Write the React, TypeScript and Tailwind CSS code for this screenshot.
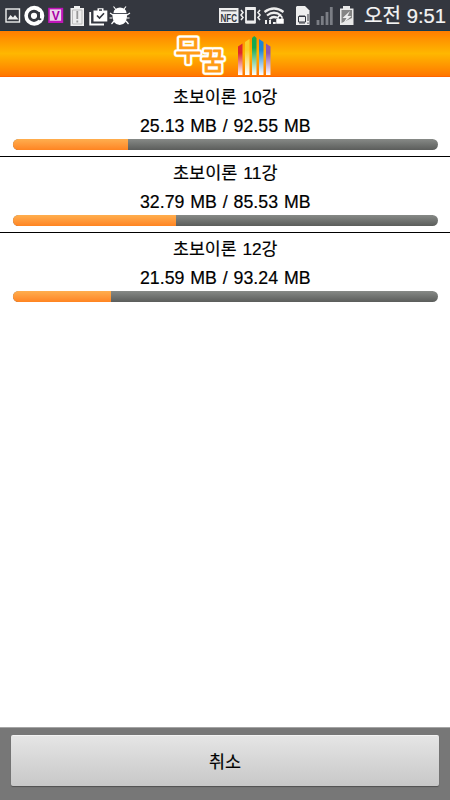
import { clsx } from "clsx";

type Download = {
	id: number;
	title: string;
	done: string;
	total: string;
	width: number;
};

const downloads: Download[] = [
	{ id: 1, title: "초보이론 10강", done: "25.13", total: "92.55", width: 115.5 },
	{ id: 2, title: "초보이론 11강", done: "32.79", total: "85.53", width: 163 },
	{ id: 3, title: "초보이론 12강", done: "21.59", total: "93.24", width: 98.5 },
];

function NotificationIcons() {
	return (
		<svg width="135" height="30" viewBox="0 0 135 30" fill="none">
			<rect x="6" y="9" width="13.5" height="13" stroke="#eee" strokeWidth="1.4" />
			<path d="M7.5 19.5l3-4.5 2.5 2.5 2-2.5 3.5 4.5z" fill="#eee" />
			<circle cx="34.3" cy="15.8" r="10" fill="#fff" />
			<circle cx="34" cy="15.8" r="4.6" stroke="#34373f" strokeWidth="3" />
			<path d="M38.8 12v6.5q1 1.5 2 0" stroke="#34373f" strokeWidth="2.2" />
			<rect x="49" y="8.6" width="13.4" height="13.6" fill="#ecd6ec" stroke="#c014b8" strokeWidth="1.6" />
			<path d="M50 21.5h12V9" stroke="#c014b8" strokeWidth="1.6" />
			<text x="55.7" y="19.5" textAnchor="middle" fontSize="12" fontWeight="700" fill="#a800a4" className="font-['Liberation_Sans']">V</text>
			<path d="M74 6h6v2h4v18H70.5V8H74z" fill="#eee" />
			<path d="M72.5 10h9.5v14h-9.5z" stroke="#bbb" />
			<path d="M77.3 11v8M77.3 20.5v2" stroke="#999" strokeWidth="1.8" />
			<path d="M90.2 12v12.5H104" stroke="#fff" strokeWidth="1.8" />
			<path d="M93.5 10.5h4V8.2h6v2.3h3.8v11H93.5z" fill="#fff" />
			<path d="M99 9.3h3v1.5h-3z" fill="#34373f" />
			<path d="M97 15.5l2.5 2.5 4.5-4.8" stroke="#34373f" strokeWidth="1.6" />
			<path d="M113.5 13a6.5 5.5 0 0 1 13 0z" fill="#fff" />
			<path d="M112.5 14h14.5q1 10-7.3 11-8.2-1-7.2-11z" fill="#fff" />
			<path d="M115.5 9l-2-2.5M124 9l2-2.5M113 15l-3-2M127 15l3-2M112 18h-2.5M127 18h2.5M114 21l-2.5 3M126 21l2.5 3" stroke="#fff" strokeWidth="1.2" />
			<path d="M112.5 13.5h14.5" stroke="#555861" strokeWidth=".8" />
		</svg>
	);
}

function SystemIcons() {
	return (
		<svg width="140" height="30" viewBox="216 0 140 30" fill="none">
			<path d="M219 8h19.5v15H219z" fill="#eee" />
			<path d="M221 10.8h15.5" stroke="#34373f" />
			<text x="228.7" y="21.5" textAnchor="middle" fontSize="10" fontWeight="700" fill="#34373f" textLength="16.5" lengthAdjust="spacingAndGlyphs" className="font-['Liberation_Sans']">NFC</text>
			<rect x="246" y="8" width="9" height="14.5" stroke="#eee" strokeWidth="1.8" />
			<path d="M246 8.5h9M246 22h9" stroke="#eee" strokeWidth="3" />
			<path d="M241 10l2 2.5-2 2.5 2 2.5-2 2.5M260 10l-2 2.5 2 2.5-2 2.5 2 2.5" stroke="#eee" strokeWidth="1.6" />
			<path d="M264.5 12q9.5-7 19 0M267 15.5q7-5.5 14 0M269.5 19q4.5-4 9 0" stroke="#eee" strokeWidth="2.2" />
			<path d="M266 24v-4M270 24v-4M273 23h3" stroke="#eee" strokeWidth="2" />
			<path d="M276 18.5h8V24h-8z" fill="#fff" stroke="#34373f" strokeWidth=".5" />
			<path d="M278 19v-2q2-2.5 4 0v2" stroke="#fff" strokeWidth="1.3" />
			<path d="M297 6h8l4.5 4.5V25H296V7z" fill="#eee" />
			<path d="M298.5 16.5h7v5.5h-7zM300 15v2M302 15v2M304 15v2M300 22v2M302 22v2M304 22v2" stroke="#34373f" />
			<path d="M308 14v7M308 22.5v1.5" stroke="#34373f" />
			<path d="M318 25v-5M322.3 25v-9M327 25V12M331.3 25V7" stroke="#7b7e85" strokeWidth="2.8" />
			<path d="M343 6h7v2.5h3.5V25H340V8.5h3z" fill="#e8e8e8" />
			<path d="M341.5 10h10.5v8l-10.5 5z" fill="#858585" />
			<path d="M350 11l-7.5 7h4l-3 5 8-7h-4z" fill="#eee" />
		</svg>
	);
}

function StatusBar() {
	return (
		<div className="flex h-[31px] shrink-0 items-start justify-between border-b border-[#173c50] bg-[#34373f]">
			<NotificationIcons />
			<div className="flex items-start">
				<SystemIcons />
				<svg width="94" height="30" viewBox="356 0 94 30">
					<text x="364" y="23" fontSize="20.5" fill="#f4f4f4" stroke="#f4f4f4" strokeWidth=".2" textLength="82" lengthAdjust="spacingAndGlyphs" className="font-['Liberation_Sans','Noto_Sans_CJK_KR',sans-serif]">오전 9:51</text>
				</svg>
			</div>
		</div>
	);
}

const logoBars = [
	{ id: "red", color: "#dc2a2a", shape: "M238 75V46.5L242.5 43.5V75Z" },
	{ id: "yellow", color: "#f9d02a", shape: "M245 75V42L249.5 39V75Z" },
	{ id: "green", color: "#16a850", shape: "M252 75V38L254.2 36L256.5 38V75Z" },
	{ id: "blue", color: "#1d84d4", shape: "M259 75V39L263.5 42V75Z" },
	{ id: "purple", color: "#9058b0", shape: "M266 75V43.5L270.5 46.5V75Z" },
];

const logoLayers = [
	{ color: "#ffcf40", width: 6.5 },
	{ color: "#ffffff", width: 5.4 },
	{ color: "#ff9c14", width: 1 },
];

function Header() {
	return (
		<header className="flex h-[46px] shrink-0 justify-center border-b border-[#ff6500] bg-linear-to-b from-[#ff7d00] via-[#ffb700] to-[#ff7600]">
			<svg width="110" height="45" viewBox="170 31 110 45" className="overflow-visible">
				<defs>
					{logoBars.map((bar) => (
						<linearGradient key={bar.id} id={bar.id} x1="0" x2="0" y1="0" y2="1">
							<stop offset=".3" stopColor={bar.color} />
							<stop offset="1" stopColor="#fff" />
						</linearGradient>
					))}
				</defs>
				<g className="font-['Noto_Sans_CJK_KR',sans-serif]" strokeLinejoin="round" strokeLinecap="round">
					{logoLayers.map((layer) => (
						<g key={layer.color} fill={layer.color} stroke={layer.color} strokeWidth={layer.width}>
							<text x="175.5" y="61" fontSize="28">무</text>
							<text x="201.5" y="69.5" fontSize="25">꿈</text>
						</g>
					))}
				</g>
				{logoBars.map((bar) => (
					<path key={bar.id} d={bar.shape} fill={`url(#${bar.id})`} />
				))}
			</svg>
		</header>
	);
}

function Label({ text, width, size = 17 }: { text: string; width: number; size?: number }) {
	return (
		<svg width={width} height="28" className="block shrink-0 overflow-visible">
			<text x="0" y="20.5" fontSize={size} wordSpacing="1" fill="#000" stroke="#000" strokeWidth=".2" textLength={width} lengthAdjust="spacingAndGlyphs" className="font-['Liberation_Sans','Noto_Sans_CJK_KR',sans-serif]">
				{text}
			</text>
		</svg>
	);
}

function DownloadRow({ item, first, last }: { item: Download; first: boolean; last: boolean }) {
	return (
		<li className={clsx("flex flex-col items-center", first ? "h-20 pt-[5px]" : "h-[76px] pt-px", !last && "border-b border-black")}>
			<Label text={item.title} width={104.5} />
			<div className="mt-px">
				<Label text={`${item.done} MB / ${item.total} MB`} width={170.5} size={18} />
			</div>
			<div className="h-[11px] w-[425px] shrink-0 overflow-hidden rounded-full bg-linear-to-b from-[#878a87] to-[#5b5d5b]">
				<div className="h-full bg-linear-to-b from-[#ffae4e] to-[#ff8420]" style={{ width: item.width }} />
			</div>
		</li>
	);
}

export default function App() {
	return (
		<main className="flex h-[800px] w-[450px] flex-col overflow-hidden bg-white">
			<StatusBar />
			<Header />
			<ul className="flex-1">
				{downloads.map((item, i) => (
					<DownloadRow key={item.id} item={item} first={i === 0} last={i === downloads.length - 1} />
				))}
			</ul>
			<footer className="h-[73px] shrink-0 border-t border-[#a5a5a5] bg-[#777] px-[11px] pt-[7px]">
				<button className="flex h-[51px] w-full items-center justify-center rounded-xs border-t border-[#f2f2f2] bg-linear-to-b from-[#e5e5e5] to-[#c8c8c8] shadow-[0_1px_1px_#505050]">
					<Label text="취소" width={32} />
				</button>
			</footer>
		</main>
	);
}
